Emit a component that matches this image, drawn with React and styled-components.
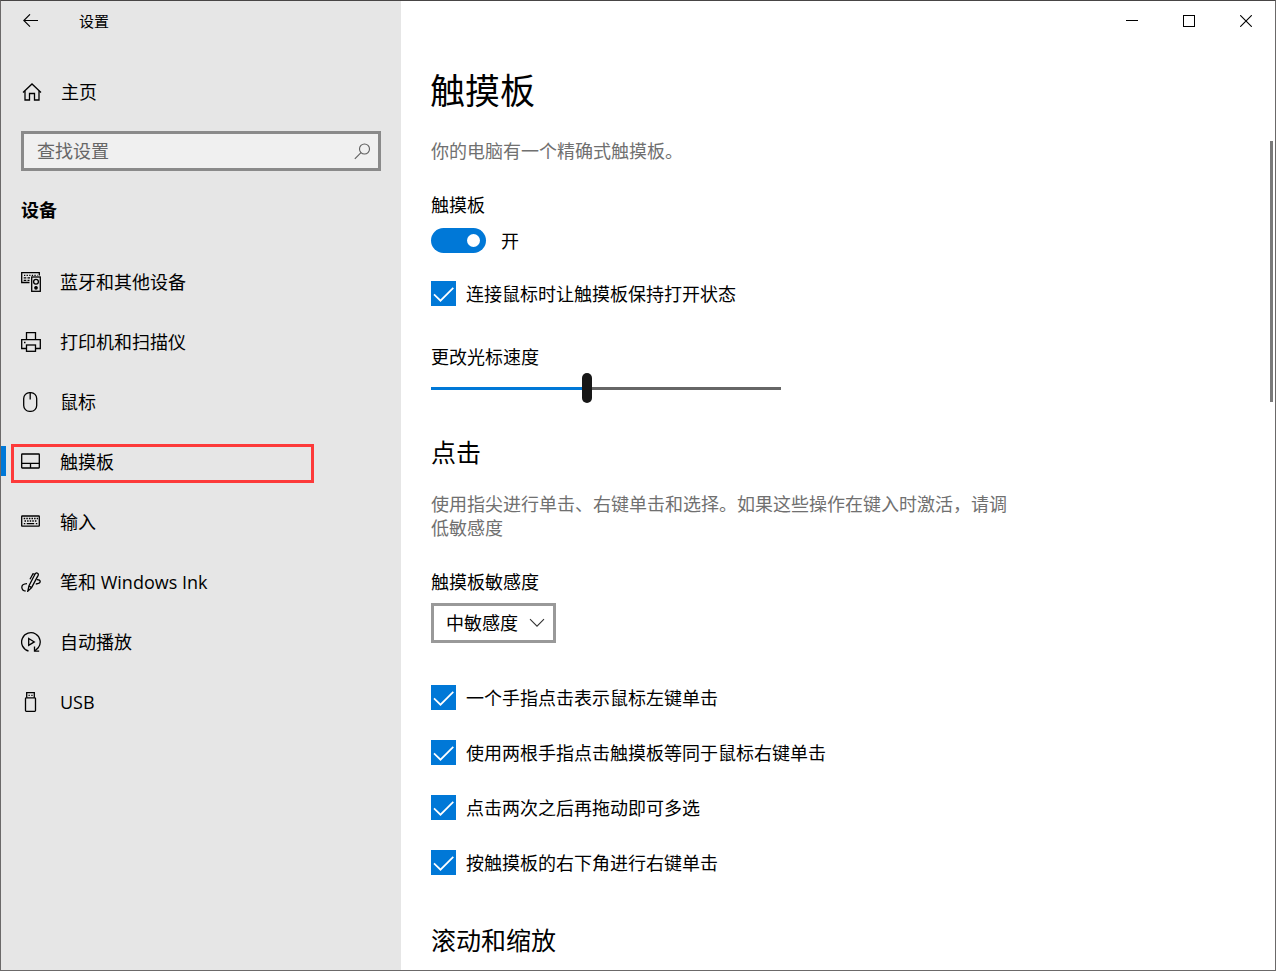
import { useState } from "react";
import styled, { createGlobalStyle, css } from "styled-components";

const GlobalStyle = createGlobalStyle`
    *, *::before, *::after {
        box-sizing: border-box;
    }
    body {
        margin: 0;
        background: #fff;
        color: #000;
        font-family: "Open Sans", "Noto Sans CJK SC", sans-serif;
        font-size: 18px;
        line-height: 24px;
    }
    button, input, select {
        margin: 0;
        font: inherit;
        color: inherit;
    }
`

const Window = styled.div`
    display: grid;
    grid-template-columns: 400px minmax(0, 1fr);
    height: 100vh;
    border: 1px solid #6b6969;
    border-top-color: #474545;
    overflow: hidden;
`

const Sidebar = styled.aside`
    background: #e6e6e6;
`

const TitleBar = styled.header`
    display: flex;
    align-items: center;
    height: 40px;
    font-size: 15px;
`

const BackButton = styled.button`
    display: flex;
    align-items: center;
    justify-content: center;
    width: 60px;
    height: 40px;
    margin-right: 18px;
    padding: 0;
    border: 0;
    background: none;
`

const Icon = styled.svg`
    display: block;
    flex: none;
    fill: none;
    stroke: currentColor;
    stroke-width: ${({$weight})=>$weight || 1.3};
`

const NavItem = styled.a`
    position: relative;
    display: flex;
    align-items: center;
    gap: 19px;
    height: 60px;
    padding: 0 20px;
    color: #000;
    text-decoration: none;

    ${({$active})=>$active && css`
        &::before {
            content: "";
            position: absolute;
            left: 0;
            top: 14px;
            width: 5px;
            height: 30px;
            background: #0078d7;
        }
    `}
`

const Highlight = styled.span`
    position: absolute;
    left: 10px;
    right: 87px;
    top: 12px;
    bottom: 9px;
    border: 3px solid #fd3a3a;
`

const HomeLink = styled(NavItem)`
    gap: 18px;
    height: 40px;
    margin-top: 31px;
`

const SearchBox = styled.label`
    display: flex;
    align-items: center;
    height: 40px;
    margin: 19px 20px 0;
    padding: 0 7px 0 13px;
    border: 3px solid #8a8a8a;
    background: #f0f0f0;
    color: #5f5f5f;
`

const SearchInput = styled.input`
    flex: 1;
    min-width: 0;
    padding: 0;
    border: 0;
    outline: 0;
    background: none;

    &::placeholder {
        color: #666;
        opacity: 1;
    }
`

const GroupTitle = styled.h2`
    margin: 27px 20px 30px;
    font-size: 18px;
    line-height: 24px;
    font-weight: 700;
`

const Content = styled.div`
    display: flex;
    flex-direction: column;
    min-width: 0;
    min-height: 0;
`

const CaptionBar = styled.div`
    display: flex;
    justify-content: flex-end;
    padding-right: 1px;
`

const CaptionButton = styled.button`
    display: flex;
    align-items: center;
    justify-content: center;
    width: 57px;
    height: 40px;
    padding: 0;
    border: 0;
    background: none;
`

const PageTitle = styled.h1`
    margin: 26px 29px 24px;
    font-size: 35px;
    line-height: 48px;
    font-weight: 400;
`

const Scroller = styled.div`
    display: flex;
    flex: 1;
    min-height: 0;
`

const Page = styled.main`
    flex: 1;
    min-width: 0;
    padding: 0 30px;
    overflow: hidden;
`

const Rail = styled.div`
    width: 5px;
    padding-top: 2px;
`

const Thumb = styled.div`
    width: 3px;
    height: ${({$ratio})=>$ratio}%;
    background: #7a7a7a;
`

const Hint = styled.p`
    max-width: 580px;
    margin: 0 0 30px;
    color: #707070;
`

const SectionTitle = styled.h2`
    margin: ${({$top})=>$top}px 0 23px;
    font-size: 25px;
    line-height: 34px;
    font-weight: 400;
`

const Field = styled.div`
    display: flex;
    flex-direction: column;
    align-items: flex-start;
    gap: ${({$gap})=>$gap}px;
`

const SwitchRow = styled.label`
    display: flex;
    align-items: center;
    gap: 15px;
`

const Switch = styled.input`
    appearance: none;
    display: flex;
    align-items: center;
    justify-content: flex-end;
    width: 55px;
    height: 25px;
    padding: 0 6px;
    border-radius: 13px;
    background: #0078d7;

    &::before {
        content: "";
        width: 13px;
        height: 13px;
        border-radius: 50%;
        background: #fff;
    }
    &:not(:checked) {
        justify-content: flex-start;
        background: #999;
    }
`

const CheckRow = styled.label`
    display: flex;
    align-items: center;
    gap: 10px;
    height: 25px;
`

const CheckBox = styled.span`
    display: grid;
    width: 25px;
    height: 25px;

    & > * {
        grid-area: 1 / 1;
    }
    svg {
        pointer-events: none;
        color: #fff;
    }
`

const CheckInput = styled.input`
    appearance: none;
    width: 25px;
    height: 25px;
    border: 3px solid #666;

    &:checked {
        border: 0;
        background: #0078d7;
    }
`

const CheckList = styled.div`
    display: flex;
    flex-direction: column;
    gap: 30px;
    margin: ${({$margin})=>$margin};
`

const Slider = styled.input`
    appearance: none;
    width: 350px;
    max-width: 100%;
    height: 30px;
    background: linear-gradient(to right, #0078d7 var(--fill), #666 var(--fill)) center / 100% 3px no-repeat;

    &::-webkit-slider-thumb {
        appearance: none;
        width: 10px;
        height: 30px;
        border-radius: 5px;
        background: #171717;
    }
`

const SelectBox = styled.div`
    display: grid;
    align-items: center;

    & > * {
        grid-area: 1 / 1;
    }
    svg {
        justify-self: end;
        margin-right: 11px;
        pointer-events: none;
        color: #333;
    }
`

const Select = styled.select`
    appearance: none;
    height: 40px;
    padding: 0 35px 0 12px;
    border: 3px solid #999;
    border-radius: 0;
    background: #fff;
`

const BackIcon = ()=>(
    <Icon width="16" height="14" viewBox="0 0 16 14" $weight={1.1}>
        <path d="M15 6.5H1M7 .3L.8 6.5L7 12.7" />
    </Icon>
)

const HomeIcon = ()=>(
    <Icon width="22" height="20" viewBox="0 0 22 20">
        <path d="M2 10.5L11 2L20 10.5M4 9V18H8.5V11.5H13.5V18H18V9" />
    </Icon>
)

const SearchIcon = ()=>(
    <Icon width="17" height="17" viewBox="0 0 17 17" $weight={1.1}>
        <circle cx="10.5" cy="6" r="5" />
        <path d="M7 9.6L.8 15.8" />
    </Icon>
)

const DevicesIcon = ()=>(
    <Icon width="20" height="20" viewBox="0 0 20 20">
        <path d="M8.5 10.5H.7V.7H18.3V3.5" />
        <path d="M3 3.3H16.5" strokeDasharray="1.3 1.3" $weight={1} />
        <path d="M2.7 5.9H5.3M6.5 5.9H9M2.7 8.3H5.3M6.5 8.3H8.5" />
        <rect x="10.7" y="5" width="8.6" height="14.3" />
        <circle cx="15" cy="9.7" r="2.4" />
        <circle cx="15" cy="15.8" r="1.2" fill="currentColor" />
    </Icon>
)

const PrinterIcon = ()=>(
    <Icon width="20" height="20" viewBox="0 0 20 20">
        <path d="M5.5 7.5V.7H14.5V7.5" />
        <path d="M5.5 16.5H.7V7.7H19.3V16.5H14.5" />
        <rect x="5.5" y="13" width="9" height="6.3" />
        <path d="M3 10.5H4.5" />
    </Icon>
)

const MouseIcon = ()=>(
    <Icon width="20" height="20" viewBox="0 0 20 20">
        <rect x="2.7" y=".7" width="13" height="18.6" rx="5.8" />
        <path d="M9.2 .7V7.5" />
    </Icon>
)

const TouchpadIcon = ()=>(
    <Icon width="20" height="20" viewBox="0 0 20 20">
        <rect x=".7" y="2" width="17.6" height="14" rx=".5" />
        <path d="M.7 11.3H18.3M9.5 11.3V16" />
    </Icon>
)

const KeyboardIcon = ()=>(
    <Icon width="20" height="20" viewBox="0 0 20 20">
        <rect x=".7" y="4" width="17.6" height="10.2" rx=".5" />
        <path d="M2.7 6.5H17M3.5 9H16" strokeDasharray="1.5 1.1" />
        <path d="M2.8 11.6H4.3M5.7 11.6H13.2M14.8 11.6H16.3" />
    </Icon>
)

const PenIcon = ()=>(
    <Icon width="20" height="20" viewBox="0 0 20 20">
        <path d="M6.8 19.2L8 13.8L14.2 1.8Q15.4 .3 16.6 1.2Q17.8 2 17 3.6L10.6 15.6Z" />
        <path d="M14 2.3L12 1.7L9 7.3M8 14L10.6 15.6" />
        <path d="M6 11.6Q.8 11.9 .8 15.2Q1 18.8 4.6 19M15.8 7.6Q19.3 7.5 19.2 9.7Q18.8 11.8 14.8 12" />
    </Icon>
)

const PlayIcon = ()=>(
    <Icon width="20" height="20" viewBox="0 0 20 20">
        <path d="M7.5 19A9.3 9.3 0 1 1 17.2 15.8L14 18.7" />
        <path d="M13.5 14.6V19.2H18.2" />
        <path d="M7.7 6.5L13.3 9.9L7.7 13.4Z" />
    </Icon>
)

const UsbIcon = ()=>(
    <Icon width="20" height="20" viewBox="0 0 20 20">
        <path d="M5.7 5.8V.7H13.3V5.8" />
        <rect x="4.5" y="5.8" width="10" height="13.5" rx=".8" />
        <path d="M7.5 3.3H8.8M10.3 3.3H11.6" />
    </Icon>
)

const CheckIcon = ()=>(
    <Icon width="25" height="25" viewBox="0 0 25 25" $weight={1.7}>
        <path d="M3 13.3L9.5 19.7L22.3 6.8" />
    </Icon>
)

const ChevronIcon = ()=>(
    <Icon width="16" height="10" viewBox="0 0 16 10" $weight={1.1}>
        <path d="M1 1.2L8 8.2L15 1.2" />
    </Icon>
)

const navItems = [
    {label: "蓝牙和其他设备", icon: DevicesIcon},
    {label: "打印机和扫描仪", icon: PrinterIcon},
    {label: "鼠标", icon: MouseIcon},
    {label: "触摸板", icon: TouchpadIcon, active: true},
    {label: "输入", icon: KeyboardIcon},
    {label: "笔和 Windows Ink", icon: PenIcon},
    {label: "自动播放", icon: PlayIcon},
    {label: "USB", icon: UsbIcon},
]

const tapOptions = [
    "一个手指点击表示鼠标左键单击",
    "使用两根手指点击触摸板等同于鼠标右键单击",
    "点击两次之后再拖动即可多选",
    "按触摸板的右下角进行右键单击",
]

const Check = ({label})=>(
    <CheckRow>
        <CheckBox>
            <CheckInput type="checkbox" defaultChecked />
            <CheckIcon />
        </CheckBox>
        {label}
    </CheckRow>
)

const SpeedSlider = ()=>{
    const [speed, setSpeed] = useState(5)
    return (
        <Slider
            id="speed"
            type="range"
            min="1"
            max="10"
            value={speed}
            onChange={(e)=>setSpeed(Number(e.target.value))}
            style={{"--fill": `${(speed - 1) / 9 * 100}%`}}
        />
    )
}

export default function App(){
    const [enabled, setEnabled] = useState(true)

    return (
        <>
            <GlobalStyle />
            <Window>
                <Sidebar>
                    <TitleBar>
                        <BackButton aria-label="返回"><BackIcon /></BackButton>
                        设置
                    </TitleBar>
                    <HomeLink href="#home"><HomeIcon />主页</HomeLink>
                    <SearchBox>
                        <SearchInput type="text" placeholder="查找设置" aria-label="查找设置" />
                        <SearchIcon />
                    </SearchBox>
                    <GroupTitle>设备</GroupTitle>
                    <nav>
                        {navItems.map(({label, icon: ItemIcon, active})=>(
                            <NavItem key={label} href="#" $active={active} aria-current={active ? "page" : undefined}>
                                <ItemIcon />
                                {label}
                                {active && <Highlight />}
                            </NavItem>
                        ))}
                    </nav>
                </Sidebar>
                <Content>
                    <CaptionBar>
                        <CaptionButton aria-label="最小化">
                            <Icon width="12" height="12" viewBox="0 0 12 12" $weight={1}><path d="M0 5.5H12" /></Icon>
                        </CaptionButton>
                        <CaptionButton aria-label="最大化">
                            <Icon width="12" height="12" viewBox="0 0 12 12" $weight={1}><rect x=".5" y=".5" width="11" height="11" /></Icon>
                        </CaptionButton>
                        <CaptionButton aria-label="关闭">
                            <Icon width="12" height="12" viewBox="0 0 12 12" $weight={1.1}><path d="M.2 .2L11.8 11.8M11.8 .2L.2 11.8" /></Icon>
                        </CaptionButton>
                    </CaptionBar>
                    <PageTitle>触摸板</PageTitle>
                    <Scroller>
                        <Page>
                            <Hint>你的电脑有一个精确式触摸板。</Hint>
                            <Field $gap={11}>
                                <label htmlFor="touchpad">触摸板</label>
                                <SwitchRow>
                                    <Switch id="touchpad" type="checkbox" role="switch" checked={enabled} onChange={()=>setEnabled(!enabled)} />
                                    {enabled ? "开" : "关"}
                                </SwitchRow>
                            </Field>
                            <CheckList $margin="28px 0 39px">
                                <Check label="连接鼠标时让触摸板保持打开状态" />
                            </CheckList>
                            <Field $gap={4}>
                                <label htmlFor="speed">更改光标速度</label>
                                <SpeedSlider />
                            </Field>
                            <SectionTitle $top={32}>点击</SectionTitle>
                            <Hint>使用指尖进行单击、右键单击和选择。如果这些操作在键入时激活，请调低敏感度</Hint>
                            <Field $gap={9}>
                                <label htmlFor="sensitivity">触摸板敏感度</label>
                                <SelectBox>
                                    <Select id="sensitivity" defaultValue="中敏感度">
                                        <option>中敏感度</option>
                                    </Select>
                                    <ChevronIcon />
                                </SelectBox>
                            </Field>
                            <CheckList $margin="42px 0 0">
                                {tapOptions.map((label)=><Check key={label} label={label} />)}
                            </CheckList>
                            <SectionTitle $top={48}>滚动和缩放</SectionTitle>
                        </Page>
                        <Rail><Thumb $ratio={31.5} /></Rail>
                    </Scroller>
                </Content>
            </Window>
        </>
    )
}
